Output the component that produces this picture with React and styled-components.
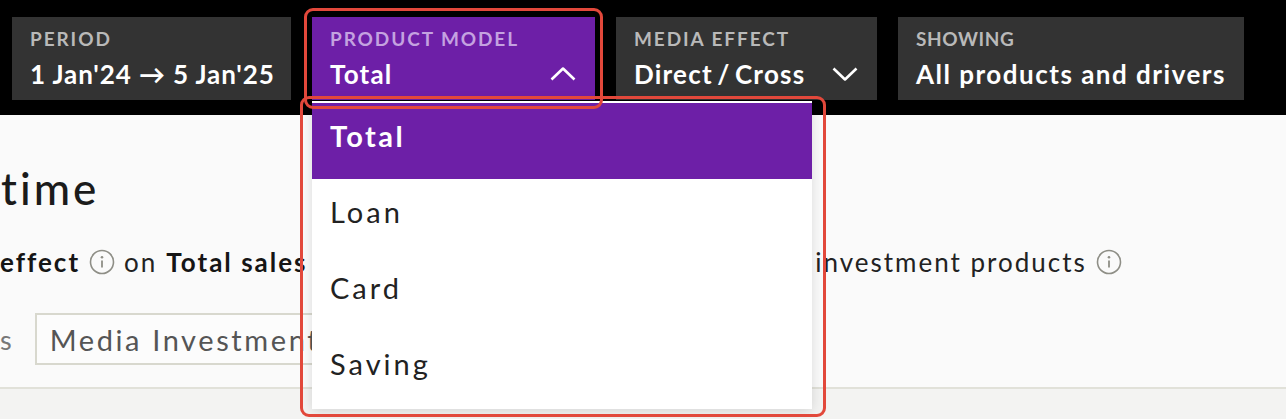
import React from "react";
import styled, { createGlobalStyle } from "styled-components";

const GlobalStyle = createGlobalStyle`
  html, body {
    margin: 0;
    padding: 0;
  }
  body {
    background: #fafafa;
    font-family: Lato, "Open Sans", sans-serif;
    color: #1d1d1d;
  }
`;

const Page = styled.div`
  position: relative;
  width: 1286px;
  height: 419px;
  overflow: hidden;
  background: #fafafa;
`;

const TopBar = styled.div`
  display: flex;
  align-items: flex-start;
  gap: 21px;
  height: 115px;
  box-sizing: border-box;
  padding: 17px 0 0 12px;
  background: #000;
  position: relative;
  z-index: 2;
`;

const ChipWrap = styled.div`
  position: relative;
`;

const Chip = styled.div`
  box-sizing: border-box;
  width: ${(p) => p.$w}px;
  height: 83px;
  padding: 10px 19px 0 18px;
  background: ${(p) => (p.$active ? "#6d1fa7" : "#333333")};
  display: flex;
  flex-direction: column;
`;

const ChipLabel = styled.div`
  font-size: 19px;
  font-weight: 700;
  line-height: 24px;
  letter-spacing: ${(p) => p.$ls || 1.9}px;
  text-transform: uppercase;
  color: ${(p) => (p.$active ? "#c4a2e0" : "#b9b9b9")};
`;

const ChipValue = styled.div`
  display: flex;
  align-items: center;
  justify-content: space-between;
  margin-top: 6px;
  font-size: 26px;
  font-weight: 700;
  line-height: 34px;
  letter-spacing: ${(p) => p.$ls || 1.2}px;
  color: #fff;
  white-space: nowrap;
`;

const Chevron = styled.svg`
  width: 26px;
  height: 14px;
  flex: none;
`;

const Highlight = styled.div`
  position: absolute;
  inset: ${(p) => p.$inset};
  border: 3px solid #e2483b;
  border-radius: 9px;
  pointer-events: none;
  z-index: 5;
`;

const Menu = styled.div`
  position: absolute;
  top: calc(100% + 1px);
  left: 0;
  width: 500px;
  box-sizing: border-box;
  padding: 2px 0 2px;
  background: #fff;
  box-shadow: 0 2px 12px rgba(0, 0, 0, 0.13);
  z-index: 4;
`;

const MenuItem = styled.div`
  height: 76px;
  box-sizing: border-box;
  padding: 0 18px 10px;
  font-size: 29px;
  line-height: 66px;
  letter-spacing: ${(p) => (p.$active ? 2.4 : 3)}px;
  font-weight: ${(p) => (p.$active ? 700 : 400)};
  background: ${(p) => (p.$active ? "#6d1fa7" : "transparent")};
  color: ${(p) => (p.$active ? "#fff" : "#222")};
`;

const Content = styled.div`
  display: flex;
  flex-direction: column;
  padding-top: 47px;
`;

const Title = styled.h1`
  margin: 0 0 0 1px;
  font-size: 44px;
  font-weight: 500;
  line-height: 52px;
  letter-spacing: 3px;
  color: #1b1b1b;
`;

const Sentence = styled.div`
  display: flex;
  align-items: center;
  gap: 9px;
  margin-top: 32px;
  font-size: 26px;
  line-height: 32px;
  letter-spacing: 2px;
  white-space: nowrap;
  color: #222;
`;

const Strong = styled.b`
  font-weight: 700;
  color: #151515;
`;

const InfoSvg = styled.svg`
  width: 26px;
  height: 26px;
  flex: none;
`;

const FilterRow = styled.div`
  display: flex;
  align-items: center;
  gap: 21px;
  margin-top: 35px;
`;

const FilterLabel = styled.span`
  font-size: 27px;
  color: #777;
  letter-spacing: 2px;
`;

const SelectBox = styled.div`
  box-sizing: border-box;
  width: 620px;
  height: 52px;
  padding-left: 13px;
  display: flex;
  align-items: center;
  border: 2px solid #d8d8ce;
  background: #fcfcfc;
  font-size: 29px;
  letter-spacing: 2.6px;
  color: #555;
  white-space: nowrap;
`;

const Divider = styled.div`
  margin-top: 22px;
  height: 2px;
  background: #e1e1d9;
`;

const Lower = styled.div`
  height: 40px;
  background: #f3f3f2;
`;

const Info = () => (
  <InfoSvg viewBox="0 0 26 26">
    <circle cx="13" cy="13" r="11.5" fill="none" stroke="#8e8e86" strokeWidth="1.6" />
    <circle cx="13" cy="8.2" r="1.3" fill="#8e8e86" />
    <line x1="13" y1="11.5" x2="13" y2="18.5" stroke="#8e8e86" strokeWidth="1.8" />
  </InfoSvg>
);

const ChevronIcon = ({ up }) => (
  <Chevron viewBox="0 0 26 14">
    <polyline
      points={up ? "1.5,12.5 13,1.5 24.5,12.5" : "1.5,1.5 13,12.5 24.5,1.5"}
      fill="none"
      stroke="#fff"
      strokeWidth="2.6"
      strokeLinejoin="round"
    />
  </Chevron>
);

const models = ["Total", "Loan", "Card", "Saving"];

export default function App() {
  return (
    <Page>
      <GlobalStyle />
      <TopBar>
        <Chip $w={279}>
          <ChipLabel>Period</ChipLabel>
          <ChipValue $ls={0.9}>1 Jan'24 → 5 Jan'25</ChipValue>
        </Chip>
        <ChipWrap>
          <Chip $w={283} $active>
            <ChipLabel $active>Product model</ChipLabel>
            <ChipValue>
              Total
              <ChevronIcon up />
            </ChipValue>
          </Chip>
          <Highlight $inset="-9px -8px -9px -8px" />
          <Menu>
            {models.map((m) => (
              <MenuItem key={m} $active={m === "Total"}>
                {m}
              </MenuItem>
            ))}
            <Highlight $inset="-5px -14px -8px -12px" />
          </Menu>
        </ChipWrap>
        <Chip $w={261}>
          <ChipLabel>Media effect</ChipLabel>
          <ChipValue>
            Direct{"\u2009"}/{"\u2009"}Cross
            <ChevronIcon />
          </ChipValue>
        </Chip>
        <Chip $w={346}>
          <ChipLabel $ls={0.6}>Showing</ChipLabel>
          <ChipValue $ls={1.5}>All products and drivers</ChipValue>
        </Chip>
      </TopBar>

      <Content>
        <Title>time</Title>
        <Sentence>
          <Strong>effect</Strong>
          <Info />
          <span>on</span>
          <span>
            <Strong>Total sales</Strong> from all products by media and other investment products
          </span>
          <Info />
        </Sentence>
        <FilterRow>
          <FilterLabel>s</FilterLabel>
          <SelectBox>Media Investment</SelectBox>
        </FilterRow>
        <Divider />
        <Lower />
      </Content>
    </Page>
  );
}
